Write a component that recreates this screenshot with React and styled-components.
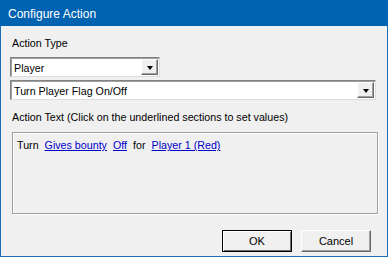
import styled, { createGlobalStyle } from 'styled-components'

const Global = createGlobalStyle`
   html, body{
      margin: 0;
      padding: 0;
      background: #f0f0f0;
   }
   *{
      box-sizing: border-box;
   }
`

const Window = styled.div`
   width: 388px;
   height: 257px;
   display: flex;
   flex-direction: column;
   background: #f0f0f0;
   border: 1px solid #1a6fb5;
   border-top: none;
   font-family: "Liberation Sans", Arial, sans-serif;
   font-size: 10.7px;
   color: #000;
`

const TitleBar = styled.div`
   height: 26px;
   margin: 0 -1px;
   background: #0063b1;
   color: #ffffff;
   font-size: 12px;
   display: flex;
   align-items: center;
   padding-left: 8px;
   padding-top: 1px;
`

const Body = styled.div`
   flex: 1;
   display: flex;
   flex-direction: column;
   padding: 11px 10px 0 9px;
`

const Label = styled.div`
   height: 13px;
   line-height: 13px;
   margin-left: 2px;
   margin-top: ${p => p.$top || 0}px;
   margin-bottom: ${p => p.$gap || 8}px;
`

const Select = styled.div`
   width: ${p => p.$width}px;
   height: 20px;
   background: #ffffff;
   border: 1px solid #828282;
   border-right-color: #dcdcdc;
   border-bottom-color: #dcdcdc;
   box-shadow: inset 1px 1px 0 #a0a0a0;
   display: flex;
   align-items: center;
   margin-bottom: ${p => p.$gap || 0}px;
   & > span{
      flex: 1;
      padding-left: 3px;
      padding-top: 1px;
   }
`

const Arrow = styled.div`
   width: 17px;
   height: 16px;
   margin-right: 1px;
   background: #f0f0f0;
   border: 1px solid;
   border-color: #ffffff #696969 #696969 #ffffff;
   box-shadow: inset -1px -1px 0 #a0a0a0;
   display: flex;
   align-items: center;
   justify-content: center;
   &::after{
      content: "";
      border-left: 3.5px solid transparent;
      border-right: 3.5px solid transparent;
      border-top: 4px solid #000;
      margin-top: 1px;
   }
`

const TextBox = styled.div`
   width: 366px;
   height: 82px;
   margin-left: 2px;
   border: 1px solid #a0a0a0;
   box-shadow: 1px 1px 0 #ffffff, inset 1px 1px 0 #ffffff;
   padding: 6px 4px;
   display: flex;
   gap: 6px;
   line-height: 13px;
`

const Link = styled.span`
   color: #0000cc;
   text-decoration: underline;
`

const Footer = styled.div`
   display: flex;
   justify-content: flex-end;
   gap: 9px;
   margin-top: 16px;
   padding-right: 6px;
`

const Button = styled.button`
   width: 70px;
   height: 22px;
   background: #f0f0f0;
   font-family: inherit;
   font-size: 11px;
   color: #000;
   padding: 0;
   border: 1px solid;
   border-color: ${p => p.$default ? '#000' : '#ffffff #696969 #696969 #ffffff'};
   box-shadow: ${p => p.$default
      ? 'inset 1px 1px 0 #ffffff, inset -1px -1px 0 #696969'
      : 'inset -1px -1px 0 #a0a0a0'};
`

export default function App(){
   return(
      <>
         <Global/>
         <Window>
            <TitleBar>Configure Action</TitleBar>
            <Body>
               <Label $gap={7}>Action Type</Label>
               <Select $width={150} $gap={3}>
                  <span>Player</span>
                  <Arrow/>
               </Select>
               <Select $width={366}>
                  <span>Turn Player Flag On/Off</span>
                  <Arrow/>
               </Select>
               <Label $top={11} $gap={8}>Action Text (Click on the underlined sections to set values)</Label>
               <TextBox>
                  <span>Turn</span>
                  <Link>Gives bounty</Link>
                  <Link>Off</Link>
                  <span>for</span>
                  <Link>Player 1 (Red)</Link>
               </TextBox>
               <Footer>
                  <Button $default>OK</Button>
                  <Button>Cancel</Button>
               </Footer>
            </Body>
         </Window>
      </>
   )
}
